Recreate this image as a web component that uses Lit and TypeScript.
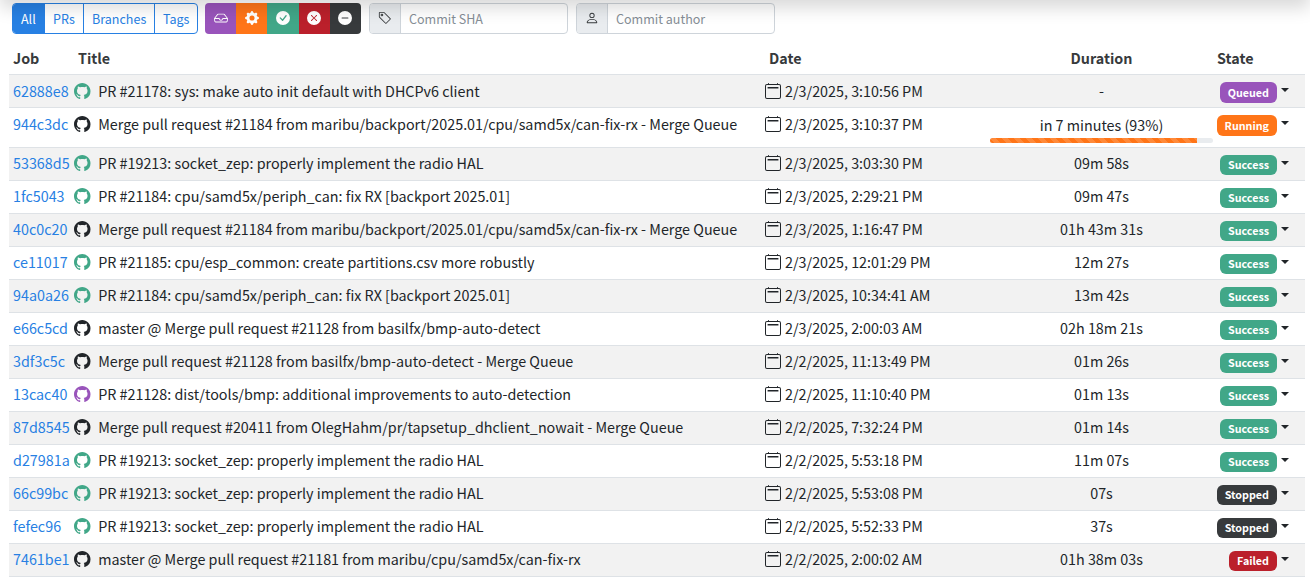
import { LitElement, html, css, svg } from "lit";
import { customElement, property } from "lit/decorators.js";

const ICONS: Record<string, unknown> = {
  inbox: svg`<path d="M4.98 4a.5.5 0 0 0-.39.188L1.54 8H6a.5.5 0 0 1 .5.5 1.5 1.5 0 1 0 3 0A.5.5 0 0 1 10 8h4.46l-3.05-3.812A.5.5 0 0 0 11.02 4zm9.954 5H10.45a2.5 2.5 0 0 1-4.9 0H1.066l.32 2.562a.5.5 0 0 0 .497.438h12.234a.5.5 0 0 0 .496-.438zM3.809 3.563A1.5 1.5 0 0 1 4.981 3h6.038a1.5 1.5 0 0 1 1.172.563l3.7 4.625a.5.5 0 0 1 .105.374l-.39 3.124A1.5 1.5 0 0 1 14.117 13H1.883a1.5 1.5 0 0 1-1.489-1.314l-.39-3.124a.5.5 0 0 1 .106-.374z"/>`,
  gear: svg`<path d="M9.405 1.05c-.413-1.4-2.397-1.4-2.81 0l-.1.34a1.464 1.464 0 0 1-2.105.872l-.31-.17c-1.283-.698-2.686.705-1.987 1.987l.169.311c.446.82.023 1.841-.872 2.105l-.34.1c-1.4.413-1.4 2.397 0 2.81l.34.1a1.464 1.464 0 0 1 .872 2.105l-.17.31c-.698 1.283.705 2.686 1.987 1.987l.311-.169a1.464 1.464 0 0 1 2.105.872l.1.34c.413 1.4 2.397 1.4 2.81 0l.1-.34a1.464 1.464 0 0 1 2.105-.872l.31.17c1.283.698 2.686-.705 1.987-1.987l-.169-.311a1.464 1.464 0 0 1 .872-2.105l.34-.1c1.4-.413 1.4-2.397 0-2.81l-.34-.1a1.464 1.464 0 0 1-.872-2.105l.17-.31c.698-1.283-.705-2.686-1.987-1.987l-.311.169a1.464 1.464 0 0 1-2.105-.872zM8 10.93a2.929 2.929 0 1 1 0-5.86 2.929 2.929 0 0 1 0 5.858z"/>`,
  check: svg`<path d="M16 8A8 8 0 1 1 0 8a8 8 0 0 1 16 0m-3.97-3.03a.75.75 0 0 0-1.08.022L7.477 9.417 5.384 7.323a.75.75 0 0 0-1.06 1.06L6.97 11.03a.75.75 0 0 0 1.079-.02l3.992-4.99a.75.75 0 0 0-.01-1.05z"/>`,
  cross: svg`<path d="M16 8A8 8 0 1 1 0 8a8 8 0 0 1 16 0M5.354 4.646a.5.5 0 1 0-.708.708L7.293 8l-2.647 2.646a.5.5 0 0 0 .708.708L8 8.707l2.646 2.647a.5.5 0 0 0 .708-.708L8.707 8l2.647-2.646a.5.5 0 0 0-.708-.708L8 7.293z"/>`,
  dash: svg`<path d="M16 8A8 8 0 1 1 0 8a8 8 0 0 1 16 0M4.5 7.5a.5.5 0 0 0 0 1h7a.5.5 0 0 0 0-1z"/>`,
  tag: svg`<path d="M6 4.5a1.5 1.5 0 1 1-3 0 1.5 1.5 0 0 1 3 0m-1 0a.5.5 0 1 0-1 0 .5.5 0 0 0 1 0"/><path d="M2 1h4.586a1 1 0 0 1 .707.293l7 7a1 1 0 0 1 0 1.414l-4.586 4.586a1 1 0 0 1-1.414 0l-7-7A1 1 0 0 1 1 6.586V2a1 1 0 0 1 1-1m0 5.586 7 7L13.586 9l-7-7H2z"/>`,
  person: svg`<path d="M8 8a3 3 0 1 0 0-6 3 3 0 0 0 0 6m2-3a2 2 0 1 1-4 0 2 2 0 0 1 4 0m4 8c0 1-1 1-1 1H3s-1 0-1-1 1-4 6-4 6 3 6 4m-1-.004c-.001-.246-.154-.986-.832-1.664C11.516 10.68 10.289 10 8 10s-3.516.68-4.168 1.332c-.678.678-.83 1.418-.832 1.664z"/>`,
  github: svg`<path d="M8 0C3.58 0 0 3.58 0 8c0 3.54 2.29 6.53 5.47 7.59.4.07.55-.17.55-.38 0-.19-.01-.82-.01-1.49-2.01.37-2.53-.49-2.69-.94-.09-.23-.48-.94-.82-1.13-.28-.15-.68-.52-.01-.53.63-.01 1.08.58 1.23.82.72 1.21 1.87.87 2.33.66.07-.52.28-.87.51-1.07-1.78-.2-3.64-.89-3.64-3.95 0-.87.31-1.59.82-2.15-.08-.2-.36-1.02.08-2.12 0 0 .67-.21 2.2.82.64-.18 1.32-.27 2-.27s1.36.09 2 .27c1.53-1.04 2.2-.82 2.2-.82.44 1.1.16 1.92.08 2.12.51.56.82 1.27.82 2.15 0 3.07-1.87 3.75-3.65 3.95.29.25.54.73.54 1.48 0 1.07-.01 1.93-.01 2.2 0 .21.15.46.55.38A8.01 8.01 0 0 0 16 8c0-4.42-3.58-8-8-8"/>`,
  calendar: svg`<path d="M3.5 0a.5.5 0 0 1 .5.5V1h8V.5a.5.5 0 0 1 1 0V1h1a2 2 0 0 1 2 2v11a2 2 0 0 1-2 2H2a2 2 0 0 1-2-2V3a2 2 0 0 1 2-2h1V.5a.5.5 0 0 1 .5-.5M2 2a1 1 0 0 0-1 1v11a1 1 0 0 0 1 1h12a1 1 0 0 0 1-1V3a1 1 0 0 0-1-1z"/><path d="M2.5 4.5a.5.5 0 0 1 .5-.5h10a.5.5 0 0 1 .5.5v.5a.5.5 0 0 1-.5.5H3a.5.5 0 0 1-.5-.5z"/>`,
};

@customElement("ui-icon")
class UiIcon extends LitElement {
  @property() name = "";
  static styles = css`
    :host { display: block; width: 14px; height: 14px; flex: none; }
    .glyph { display: block; width: 100%; height: 100%; fill: currentColor; }
  `;
  render() {
    return html`<svg class="glyph" viewBox="0 0 16 16">${ICONS[this.name]}</svg>`;
  }
}

type Job = [sha: string, origin: string, title: string, date: string, duration: string, state: string, progress?: number];

const JOBS: Job[] = [
  ["62888e8", "open", "PR #21178: sys: make auto init default with DHCPv6 client", "2/3/2025, 3:10:56 PM", "-", "Queued"],
  ["944c3dc", "branch", "Merge pull request #21184 from maribu/backport/2025.01/cpu/samd5x/can-fix-rx - Merge Queue", "2/3/2025, 3:10:37 PM", "in 7 minutes (93%)", "Running", 93],
  ["53368d5", "open", "PR #19213: socket_zep: properly implement the radio HAL", "2/3/2025, 3:03:30 PM", "09m 58s", "Success"],
  ["1fc5043", "open", "PR #21184: cpu/samd5x/periph_can: fix RX [backport 2025.01]", "2/3/2025, 2:29:21 PM", "09m 47s", "Success"],
  ["40c0c20", "branch", "Merge pull request #21184 from maribu/backport/2025.01/cpu/samd5x/can-fix-rx - Merge Queue", "2/3/2025, 1:16:47 PM", "01h 43m 31s", "Success"],
  ["ce11017", "open", "PR #21185: cpu/esp_common: create partitions.csv more robustly", "2/3/2025, 12:01:29 PM", "12m 27s", "Success"],
  ["94a0a26", "open", "PR #21184: cpu/samd5x/periph_can: fix RX [backport 2025.01]", "2/3/2025, 10:34:41 AM", "13m 42s", "Success"],
  ["e66c5cd", "branch", "master @ Merge pull request #21128 from basilfx/bmp-auto-detect", "2/3/2025, 2:00:03 AM", "02h 18m 21s", "Success"],
  ["3df3c5c", "branch", "Merge pull request #21128 from basilfx/bmp-auto-detect - Merge Queue", "2/2/2025, 11:13:49 PM", "01m 26s", "Success"],
  ["13cac40", "merged", "PR #21128: dist/tools/bmp: additional improvements to auto-detection", "2/2/2025, 11:10:40 PM", "01m 13s", "Success"],
  ["87d8545", "branch", "Merge pull request #20411 from OlegHahm/pr/tapsetup_dhclient_nowait - Merge Queue", "2/2/2025, 7:32:24 PM", "01m 14s", "Success"],
  ["d27981a", "open", "PR #19213: socket_zep: properly implement the radio HAL", "2/2/2025, 5:53:18 PM", "11m 07s", "Success"],
  ["66c99bc", "open", "PR #19213: socket_zep: properly implement the radio HAL", "2/2/2025, 5:53:08 PM", "07s", "Stopped"],
  ["fefec96", "open", "PR #19213: socket_zep: properly implement the radio HAL", "2/2/2025, 5:52:33 PM", "37s", "Stopped"],
  ["7461be1", "branch", "master @ Merge pull request #21181 from maribu/cpu/samd5x/can-fix-rx", "2/2/2025, 2:00:02 AM", "01h 38m 03s", "Failed"],
];

@customElement("app-root")
class AppRoot extends LitElement {
  static styles = css`
    :host {
      display: block; position: relative; height: 582px; overflow: hidden;
      background: #fff; color: #212529;
      font-family: "Noto Sans CJK SC", "Noto Sans", sans-serif;
      font-size: 14.345px; line-height: 24px; white-space: nowrap;
      --blue: #2780e3; --purple: #9954bb; --orange: #ff7518;
      --green: #41a788; --red: #bb202b; --dark: #373a3c;
    }
    * { box-sizing: border-box; }
    .shade {
      position: absolute; left: 0; right: 0; top: -56px; height: 56px;
      box-shadow: 0 8px 16px rgba(0, 0, 0, .15); pointer-events: none;
    }
    .toolbar { display: flex; padding: 3px 0 0 12px; height: 43px; font-size: 12.54px; line-height: 21px; }
    .scopes {
      display: flex; width: 186px; height: 31px; border: 1px solid var(--blue); border-radius: 4px;
      color: var(--blue); overflow: hidden; margin-right: 7px;
    }
    .scope { padding: 4px 0 0 8px; border-left: 1px solid var(--blue); }
    .scope.all { width: 32px; background: var(--blue); color: #fff; border-left: 0; }
    .scope.prs { width: 38px; border-left: 0; }
    .scope.branches { width: 71px; }
    .scope.tags { flex: 1; }
    .states { display: flex; width: 156px; height: 31px; border-radius: 4px; overflow: hidden; margin-right: 8px; color: #fff; }
    .toggle { flex: 1; display: flex; justify-content: center; padding-top: 8px; }
    .field {
      display: flex; width: 199px; height: 31px; border: 1px solid #ced4da; border-radius: 4px;
      overflow: hidden; margin-right: 8px; background: #fff; color: #868e96;
    }
    .prefix { width: 31px; padding: 7px 0 0 8px; background: #e9ecef; border-right: 1px solid #ced4da; color: #373a3c; }
    .placeholder { padding: 4px 8px 0; }
    .table { margin: 0 5px 0 9px; }
    .row {
      display: grid; grid-template-columns: 65px 687px 229px 223px 1fr;
      height: 33px; border-bottom: 1px solid #dee2e6; padding-top: 3px;
    }
    .row.head { height: 32px; font-weight: 700; color: #373a3c; }
    .row.odd { background: #f2f2f2; }
    .row.queued { padding-top: 4px; }
    .row.busy { height: 40px; padding-top: 4px; }
    .sha { padding-left: 4px; color: var(--blue); }
    .head .sha { color: inherit; }
    .title, .date { display: flex; }
    .title { gap: 7.7px; }
    .date { gap: 4px; padding-left: 4px; }
    .head .title { padding-left: 4px; }
    .head .date { padding-left: 8px; }
    .mark { width: 16px; height: 16px; margin-top: 4px; }
    .title .mark { width: 16.5px; height: 16.5px; }
    .mark.open { color: var(--green); }
    .mark.merged { color: var(--purple); }
    .duration { text-align: center; }
    .busy .duration { padding-top: 1px; }
    .track { height: 5px; margin-top: 1px; border-radius: 3px; background: #e9ecef; overflow: hidden; }
    .fill {
      height: 100%; background: linear-gradient(45deg, rgba(255,255,255,.15) 25%, transparent 25%, transparent 50%, rgba(255,255,255,.15) 50%, rgba(255,255,255,.15) 75%, transparent 75%) 0 0 / 12px 12px var(--orange);
    }
    .state { display: flex; }
    .head .state { padding-left: 4px; }
    .slot { width: 64px; display: flex; justify-content: flex-end; padding-top: 4px; }
    .badge {
      height: 20px; border-radius: 6px; padding: 0 8px; color: #fff;
      font-size: 10.72px; font-weight: 700; line-height: 19px;
    }
    .queued .slot, .busy .slot { padding-top: 3px; }
    .queued .badge, .busy .badge { height: 21px; line-height: 22px; }
    .Queued { background: var(--purple); }
    .Running { background: var(--orange); }
    .Success { background: var(--green); }
    .Stopped { background: var(--dark); }
    .Failed { background: var(--red); }
    .caret { width: 8px; height: 4px; margin: 10px 0 0 4px; border: 4px solid transparent; border-top-color: #212529; border-bottom: 0; }
    .queued .caret, .busy .caret { margin-top: 9px; }
  `;

  row([sha, origin, title, date, duration, state, progress]: Job, i: number) {
    return html`<div class="row ${i % 2 ? "" : "odd"} ${progress ? "busy" : ""} ${state === "Queued" ? "queued" : ""}">
      <div class="sha">${sha}</div>
      <div class="title"><ui-icon class="mark ${origin}" name="github"></ui-icon><span>${title}</span></div>
      <div class="date"><ui-icon class="mark" name="calendar"></ui-icon><span>${date}</span></div>
      <div class="duration">${duration}
        ${progress ? html`<div class="track"><div class="fill" style="width:${progress}%"></div></div>` : ""}
      </div>
      <div class="state"><div class="slot"><span class="badge ${state}">${state}</span></div><i class="caret"></i></div>
    </div>`;
  }

  render() {
    const toggles = [["inbox", "Queued"], ["gear", "Running"], ["check", "Success"], ["cross", "Failed"], ["dash", "Stopped"]];
    return html`
      <div class="toolbar">
        <div class="scopes">
          <div class="scope all">All</div><div class="scope prs">PRs</div>
          <div class="scope branches">Branches</div><div class="scope tags">Tags</div>
        </div>
        <div class="states">
          ${toggles.map(([icon, state]) => html`<div class="toggle ${state}"><ui-icon name=${icon}></ui-icon></div>`)}
        </div>
        <div class="field"><div class="prefix"><ui-icon name="tag"></ui-icon></div><div class="placeholder">Commit SHA</div></div>
        <div class="field"><div class="prefix"><ui-icon name="person"></ui-icon></div><div class="placeholder">Commit author</div></div>
      </div>
      <div class="table">
        <div class="row head">
          <div class="sha">Job</div>
          <div class="title">Title</div><div class="date">Date</div><div class="duration">Duration</div><div class="state">State</div>
        </div>
        ${JOBS.map((job, i) => this.row(job, i))}
      </div>
      <div class="shade"></div>
    `;
  }
}
